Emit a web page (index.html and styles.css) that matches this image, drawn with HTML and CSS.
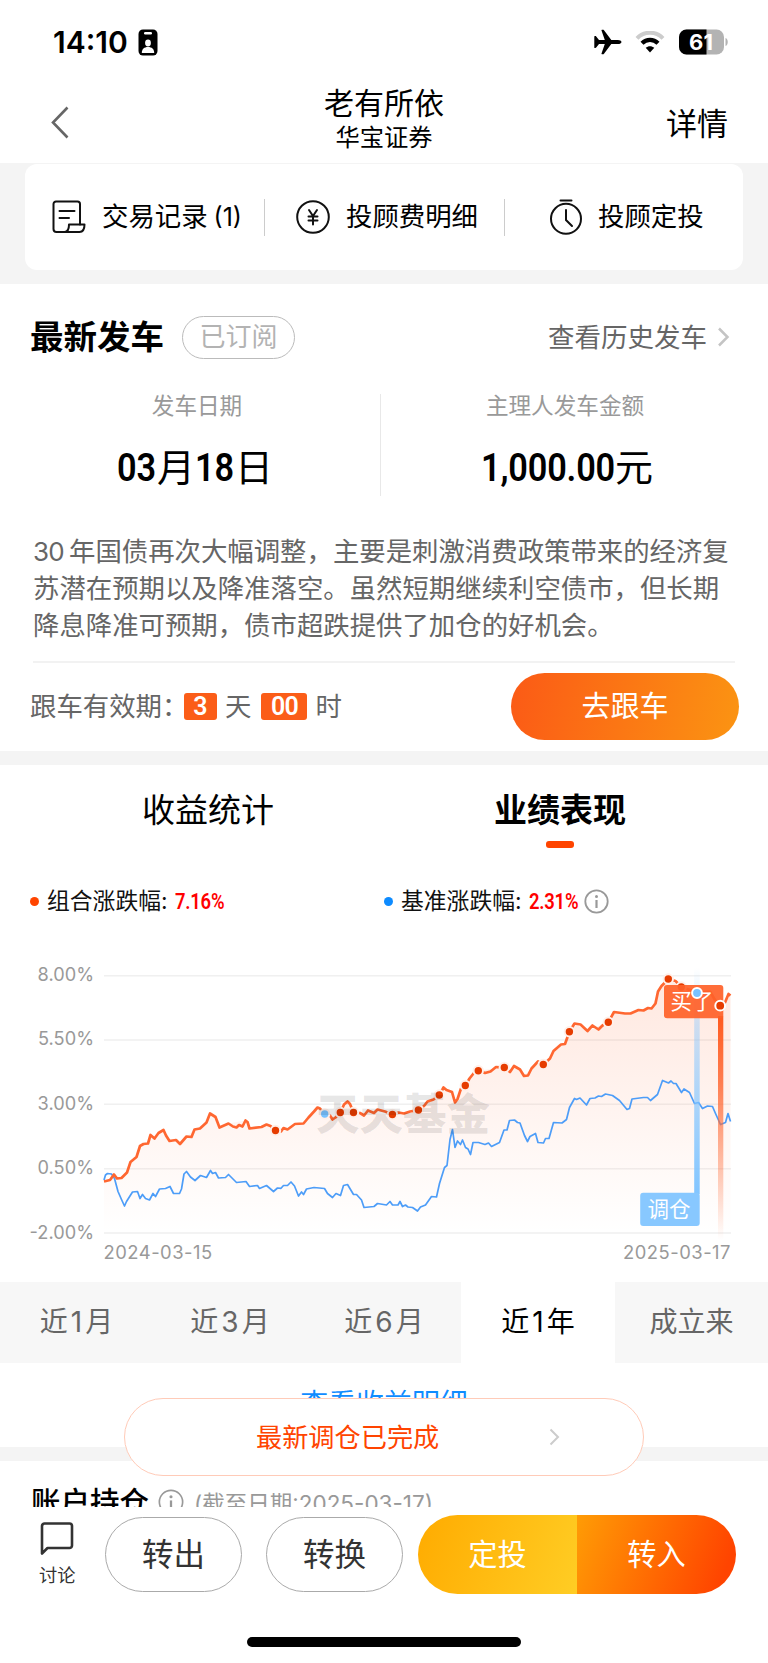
FILE: index.html
```html
<!DOCTYPE html>
<html lang="zh-CN">
<head>
    <meta charset="UTF-8">
    <meta name="viewport" content="width=device-width, initial-scale=1.0">
    <title>老有所依</title>
    <link rel="stylesheet" href="styles.css">
</head>
<body>
    <div class="status-bar">
        <div class="status-left">
            <span class="time">14:10</span>
            <svg width="20" height="27" viewBox="0 0 20 27">
                <rect x="0.5" y="0.5" width="19" height="26" rx="4.5" fill="#000"/>
                <rect x="6" y="3" width="8" height="2.4" rx="1.2" fill="#fff"/>
                <ellipse cx="10" cy="14" rx="2.9" ry="3.4" fill="#fff"/>
                <path d="M3.8 24c0-4 2.4-6 6.200-6s6.200 2 6.200 6z" fill="#fff"/>
            </svg>
        </div>
        <div class="status-right">
            <svg width="28" height="26" viewBox="0 0 28 26">
                <path d="M27.500 13c0 1.300-1.700 2.100-3.600 2.100h-6.600l-7.300 9.700c-.3.400-.6.500-1 .5h-1c-.5 0-.7-.3-.5-.8l3.300-9.400H5l-2.800 3.500c-.2.300-.5.400-.8.400H.9c-.4 0-.6-.2-.6-.6V7.600c0-.4.2-.6.6-.6h.5c.3 0 .6.100.8.400L5 10.900h5.800L7.500 1.500c-.2-.5 0-.8.500-.8h1c.4 0 .7.100 1 .5l7.300 9.700h6.600c1.900 0 3.600.8 3.600 2.100z"/>
            </svg>
            <svg class="wifi" width="30" height="22" viewBox="0 0 30 22">
                <path d="M2 7.300C9-.2 21-.2 28 7.300" fill="none" stroke="#ccc" stroke-width="4"/>
                <path d="M7 12.300c4.500-4.500 11.500-4.500 16 0" fill="none" stroke="#000" stroke-width="4.200"/>
                <path d="M15 21.500l-4.300-4.700c2.400-2.200 6.200-2.200 8.600 0z"/>
            </svg>
            <svg width="50" height="26" viewBox="0 0 50 26">
                <rect x="0" y="0.500" width="45" height="25" rx="7.500" fill="#b3b3b3"/>
                <path d="M7.500.5H27.500v25H7.500a7.500 7.500 0 0 1-7.500-7.500V8A7.500 7.500 0 0 1 7.500.5z"/>
                <path d="M46.500 9c3 1 3 7 0 8z" fill="#b3b3b3"/>
                <text x="22" y="20.500" text-anchor="middle" class="battery-num">61</text>
            </svg>
        </div>
    </div>

    <header class="nav">
        <svg class="nav-back" width="20" height="33" viewBox="0 0 20 33">
            <path d="M17.500 1.500L3 16.500l14.500 15" fill="none" stroke="#666" stroke-width="2.600"/>
        </svg>
        <div class="nav-title">
            <h1>老有所依</h1>
            <p>华宝证券</p>
        </div>
        <a class="nav-more">详情</a>
    </header>

    <div class="quick-wrap">
        <div class="quick">
            <a class="quick-item item-record">
                <svg width="34" height="34" viewBox="0 0 34 34" fill="none" stroke="#111" stroke-width="2" stroke-linejoin="round" stroke-linecap="round">
                    <path d="M14 32H4.500A3 3 0 0 1 1.500 29V4A2.500 2.500 0 0 1 4 1.500h21.500A2.500 2.500 0 0 1 28 4v20.500"/>
                    <path d="M7.500 11h15M7.500 18h9.500"/>
                    <path d="M17 24.500h15.500c0 5-2 7.500-5 7.500H12.500c3 0 4.500-3 4.500-7.500z"/>
                </svg>
                <span>交易记录<i>(1)</i></span>
            </a>
            <a class="quick-item item-fee">
                <svg width="34" height="34" viewBox="0 0 34 34" fill="none" stroke="#111" stroke-width="2" stroke-linecap="round">
                    <circle cx="17" cy="17" r="15.800"/>
                    <path d="M13 10l4 6 4-6M17 16v8.500M12.500 16.500h9M12.500 20.500h9"/>
                </svg>
                <span>投顾费明细</span>
            </a>
            <a class="quick-item item-plan">
                <svg width="34" height="36" viewBox="0 0 34 36" fill="none" stroke="#111" stroke-width="2" stroke-linecap="round">
                    <path d="M11.500 1.500h11"/>
                    <circle cx="17" cy="19.800" r="15"/>
                    <path d="M17 11v10l6 6"/>
                </svg>
                <span>投顾定投</span>
            </a>
        </div>
    </div>

    <section class="trip">
        <div class="trip-head">
            <h2>最新发车</h2>
            <span class="tag">已订阅</span>
            <a class="history"><span>查看历史发车</span>
                <svg width="14" height="20" viewBox="0 0 14 20"><path d="M2 1.500l8.500 8.500L2 18.500" fill="none" stroke="#c4c4c4" stroke-width="2.500"/></svg>
            </a>
        </div>
        <div class="trip-data">
            <div class="trip-col">
                <p class="label">发车日期</p>
                <p class="value"><b>03</b>月<b>18</b>日</p>
            </div>
            <div class="trip-col">
                <p class="label">主理人发车金额</p>
                <p class="value"><b class="amount">1,000.00</b>元</p>
            </div>
        </div>
        <p class="trip-desc"><span class="num">30</span>年国债再次大幅调整，主要是刺激消费政策带来的经济复<br>苏潜在预期以及降准落空。虽然短期继续利空债市，但长期<br>降息降准可预期，债市超跌提供了加仓的好机会。</p>
        <div class="trip-foot">
            <span class="expire">跟车有效期：</span>
            <b class="count">3</b>
            <span class="unit">天</span>
            <b class="count wide">00</b>
            <span class="unit">时</span>
            <button class="btn-follow">去跟车</button>
        </div>
    </section>

    <section class="perf">
        <div class="tabs">
            <a class="tab">收益统计</a>
            <a class="tab active">业绩表现</a>
        </div>
        <div class="legend">
            <div class="legend-item"><i class="dot"></i><span>组合涨跌幅:</span><b>7.16%</b></div>
            <div class="legend-item"><i class="dot blue"></i><span>基准涨跌幅:</span><b>2.31%</b>
                <svg width="25" height="25" viewBox="0 0 25 25"><circle cx="12.500" cy="12.500" r="11.200" fill="none" stroke="#999" stroke-width="1.800"/><circle cx="12.500" cy="7.500" r="1.500" fill="#999"/><path d="M12.500 11v8" stroke="#999" stroke-width="2.200"/></svg>
            </div>
        </div>

        <svg class="chart" width="768" height="320" viewBox="0 0 768 320">
            <defs>
                <linearGradient id="area" x1="0" y1="0" x2="0" y2="1">
                    <stop offset="0" stop-color="#ff5a1f" stop-opacity="0.14"/>
                    <stop offset="1" stop-color="#ff5a1f" stop-opacity="0"/>
                </linearGradient>
                <linearGradient id="buyBar" x1="0" y1="0" x2="0" y2="1">
                    <stop offset="0" stop-color="#ff5a1f"/>
                    <stop offset="0.3" stop-color="#ff6a36" stop-opacity="0.85"/>
                    <stop offset="1" stop-color="#ff6a36" stop-opacity="0"/>
                </linearGradient>
                <linearGradient id="adjustBar" x1="0" y1="0" x2="0" y2="1">
                    <stop offset="0" stop-color="#82c5ff" stop-opacity="0"/>
                    <stop offset="0.25" stop-color="#82c5ff" stop-opacity="0.4"/>
                    <stop offset="1" stop-color="#82c5ff"/>
                </linearGradient>
            </defs>

            <path class="grid" d="M104 25.700H731M104 90H731M104 154.300H731M104 218.700H731M104 283H731"/>
            <g class="axis-y">
                <text x="94" y="31">8.00%</text>
                <text x="94" y="95.300">5.50%</text>
                <text x="94" y="159.600">3.00%</text>
                <text x="94" y="224">0.50%</text>
                <text x="94" y="288.800">-2.00%</text>
            </g>
            <text class="axis-x" x="103.500" y="309">2024-03-15</text>
            <text class="axis-x end" x="731" y="309">2025-03-17</text>

            <path fill="url(#area)" d="M104 231.500L110 230 114 224.500 117 228.500 127 222.500 130.500 212 136.500 207 140 196 148 193.500 150.500 185 154.500 188.500 163.500 180 169.500 191 180 194 186.500 186.500 194.500 179.500 206.500 172.500 210 163.500 215.500 167 219.500 177.500 228.500 173.500 245.500 170.500 249.500 178.500 266.500 174.500 281 181.500 303.500 173.500 317.500 157.500 332.500 169.500 347.500 151.500 353.500 162.500 392.500 164.500 418.500 160 443.500 137.500 452 142 455 152.500 461 138.500 478.500 120.500 504.500 117.500 510 122 514 116 524 126 538 111.500 543.500 114.500 553.500 101 565 94 574.500 73.500 587.500 81 608.500 72 614 62 630.500 63.500 651.500 58.500 658 41.500 668.500 29 681.500 37 697 43 710 41.500 720 55.500 730.500 45.500V283H104z"/>

            <polyline class="line-base" points="104,230 105.500,225 107.500,223.500 111.500,224 114.500,228.500 118,241.500 121.500,249.500 124.500,256 126.500,251.500 132.500,242 137.500,241.500 140,248.500 142.500,244.500 145.500,248.500 149.500,250 153,243.500 155.500,246.500 159.500,239 165.500,238.500 170,236.500 173.500,243.500 179.500,243.500 181.500,239 184,224 186.500,221.500 190.500,227 195,230.500 200.500,225.500 206.500,227.500 210.500,220.500 212.500,223.500 215.500,222.500 218.500,228 225.500,227.500 228.500,224.500 236.500,232.500 246,231.500 249.500,236.500 257.500,235.500 259.500,238.500 266.500,235.500 273.500,241.500 277.500,238 281,238.300 283.500,235.500 287.500,235.500 291,232 294.500,236 298.500,246 301.500,242 303.500,244.500 306.500,239 314,237.500 324.500,238.500 327.500,243.500 332.500,247.500 336,243.500 340.500,245.500 343.500,235.500 347.500,234.500 353.500,244.500 356.500,244.500 361.500,250 364,257.500 374,256.500 377.500,253.500 386.500,255 390,251.500 392.500,255 398,255 400,251.500 402.500,256.500 405.500,255 408,257 412.500,257.500 417.500,261 420.500,257 425.500,255 431.500,246.500 436.500,247 439.500,233.500 444.500,217.500 447,215.500 450,189.500 452.500,179.500 455,197.500 457.500,191 460.500,194.500 462.500,190 465.500,197.500 468,199 470.500,204.500 473,192.500 478.500,192.500 485,194.500 488.500,193 491.500,196.500 499.500,192.500 504,180 507,180 509.500,170.500 514.500,170 517.500,172.500 520,173 524.500,185.500 527.500,191.500 530,186.500 535.500,183.500 538,192.500 543.500,193 545.500,188.500 549,188.500 553.500,172.500 562,173 566.500,169.500 569.500,157.500 574.500,148.500 576.500,149.500 580,148 586.500,155 590,148.500 595,148 598.500,146 601.500,146.500 605.500,144 612.500,145.500 619.500,150.500 627,159.500 629.500,158.500 632,149 643.500,147.500 647.500,147.500 650.500,150.500 657.500,144.500 662.500,130.500 668.500,133 671,131 673.500,133.500 676,133.500 681.500,142.500 684,139 689.500,142.500 694.500,153.500 698.500,152.500 702.500,158.500 707.500,156 712.500,156.500 715.500,163.500 720.500,174.500 725.500,172.500 728,163.500 730.500,171.500"/>
            <polyline class="line-fund" points="104,231.500 110,230 114,224.500 117,228.500 121.500,228 127,222.500 130.500,212 136.500,207 140,196 143.500,194 148,193.500 150.500,185 154.500,188.500 158.500,183 163.500,180 166,185.500 169.500,191 176,190 180,194 186.500,186.500 191.500,187 194.500,179.500 200,178.500 206.500,172.500 210,163.500 215.500,167 219.500,177.500 228.500,173.500 233,176.500 236.500,177.500 239,175 242.500,176.500 245.500,170.500 247.500,172 249.500,178.500 261.500,177 266.500,174.500 270.500,176 275.500,180.500 281,181.500 283.500,178 287.500,179.500 295,174 303.500,173.500 308.500,167.500 314,161.500 317.500,157.500 320,158.500 324.500,164 330,165.500 332.500,169.500 335.500,167.500 340.500,162.500 344,154.500 347.500,151.500 350,154 353.500,162.500 360,163 364,165.500 368,160.500 374,163 377.500,159.500 385,161.500 392.500,164.500 398.500,162.500 404,163.500 410,161.500 418.500,160 424,156 427.500,151.500 433.500,149.500 439.500,145 443.500,137.500 446.500,140 452,142 455,152.500 457.500,149 461,138.500 465.500,135.500 469.500,128.500 473.500,123.500 478.500,120.500 485,123 490.500,121.500 496,117 504.500,117.500 510,122 514,116 520,119.500 524,126 528,125.500 531.500,118.500 538,111.500 543.500,114.500 550,108.500 553.500,101 561,94.500 565,94 569.500,81.500 574.500,73.500 580.500,74.500 587.500,81 592.500,75.500 598.500,79.500 602.500,75.500 608.500,72 614,62 625,63.500 630.500,63.500 638.500,60 643.500,60.500 648,58 651.500,58.500 655.500,53.500 658,41.500 661.500,36 668.500,29 675.500,31 681.500,37 688.500,39.500 697,43 705,42 710,41.500 715,50 720,55.500 725,52.500 728.500,44 730.500,45.500"/>

            <g class="points">
                <circle cx="275.500" cy="180.500" r="4.700"/>
                <circle class="adjust" cx="324.700" cy="164" r="4.700"/>
                <circle cx="340.300" cy="162.500" r="4.700"/>
                <circle cx="353.500" cy="162.500" r="4.700"/>
                <circle cx="392.400" cy="164.500" r="4.700"/>
                <circle cx="418.400" cy="160" r="4.700"/>
                <circle cx="439.300" cy="145" r="4.700"/>
                <circle cx="465.300" cy="135.500" r="4.700"/>
                <circle cx="478.300" cy="120.800" r="4.700"/>
                <circle cx="504.300" cy="117.500" r="4.700"/>
                <circle cx="543.300" cy="114.500" r="4.700"/>
                <circle cx="569.400" cy="81.700" r="4.700"/>
                <circle cx="608.300" cy="72.200" r="4.700"/>
                <circle cx="668.300" cy="29" r="4.700"/>
                <circle cx="681.300" cy="37" r="4.700"/>
            </g>
            <text class="watermark" x="403" y="180">天天基金</text>

            <!-- 调仓标记 -->
            <rect x="694.200" y="18" width="5.500" height="226" fill="url(#adjustBar)"/>
            <rect x="640.200" y="242.700" width="59.500" height="33.300" rx="3" fill="#88c8ff"/>
            <text class="flag-text" x="669" y="266.500">调仓</text>

            <!-- 买入标记 -->
            <rect x="718" y="66" width="5.300" height="224" fill="url(#buyBar)"/>
            <rect x="664" y="35" width="59.300" height="33.300" rx="3" fill="#ff6128" fill-opacity="0.92"/>
            <text class="flag-text" x="692" y="59">买了</text>
            <g class="points front">
                <circle class="adjust" cx="697" cy="43" r="4.900"/>
                <circle cx="720.200" cy="55.700" r="4.900"/>
            </g>
        </svg>

        <div class="ranges">
            <a>近<i>1</i>月</a>
            <a>近<i>3</i>月</a>
            <a>近<i>6</i>月</a>
            <a class="active">近<i>1</i>年</a>
            <a>成立来</a>
        </div>
        <a class="detail-link">查看收益明细</a>
    </section>

    <section class="holding">
        <h3>账户持仓</h3>
        <svg width="26" height="26" viewBox="0 0 25 25"><circle cx="12.500" cy="12.500" r="11.200" fill="none" stroke="#999" stroke-width="1.600"/><circle cx="12.500" cy="7.500" r="1.500" fill="#999"/><path d="M12.500 11v8" stroke="#999" stroke-width="2.200"/></svg>
        <span>(截至日期<em>:2025-03-17)</em></span>
    </section>

    <a class="toast"><span>最新调仓已完成</span>
        <svg width="12" height="18" viewBox="0 0 12 18"><path d="M1.500 1.500L9 9l-7.500 7.500" fill="none" stroke="#ccc" stroke-width="2"/></svg>
    </a>

    <footer class="bottom">
        <div class="actions">
            <a class="talk">
                <svg width="34" height="34" viewBox="0 0 34 34"><path d="M2 31.500V4A2.500 2.500 0 0 1 4.500 1.500h25A2.500 2.500 0 0 1 32 4v19.500A2.500 2.500 0 0 1 29.500 26H7.500z" fill="none" stroke="#333" stroke-width="2.600" stroke-linejoin="round"/></svg>
                <span>讨论</span>
            </a>
            <button class="btn-line">转出</button>
            <button class="btn-line">转换</button>
            <div class="btn-group">
                <button class="btn-plan">定投</button>
                <button class="btn-in">转入</button>
            </div>
        </div>
        <div class="home-bar"></div>
    </footer>
</body>
</html>
```

FILE: styles.css
```css
* {
    box-sizing: border-box;
    margin: 0;
    padding: 0;
}

body {
    position: relative;
    width: 768px;
    height: 1663px;
    overflow: hidden;
    background-color: #fff;
    color: #000;
    font-family: Inter, "Noto Sans CJK SC", sans-serif;
}

i,
em {
    font-style: normal;
}

svg {
    display: block;
    flex-shrink: 0;
}

button {
    border: none;
    background: none;
    font-family: inherit;
}

/* 状态栏 */
.status-bar {
    display: flex;
    justify-content: space-between;
    align-items: center;
    height: 84px;
    padding: 0 39px 0 53px;
}

.status-left,
.status-right {
    display: flex;
    align-items: center;
}

.time {
    width: 85px;
    font-size: 30px;
    font-weight: 600;
    letter-spacing: 0;
}

.status-right {
    gap: 13px;
}

.wifi {
    margin-right: 1px;
}

.battery-num {
    fill: #fff;
    font-size: 22px;
    font-weight: 700;
}

/* 导航 */
.nav {
    display: grid;
    grid-template-columns: 1fr auto 1fr;
    height: 79px;
    padding: 0 40px 0 50px;
}

.nav-back {
    margin-top: 22px;
}

.nav-title {
    margin: 0 5px 0 -5px;
    text-align: center;
}

.nav-title h1 {
    font-size: 30px;
    font-weight: 400;
    line-height: 38px;
}

.nav-title p {
    font-size: 24.300px;
    line-height: 30px;
}

.nav-more {
    margin-top: 20px;
    font-size: 31px;
    line-height: 40px;
    text-align: right;
}

/* 快捷入口 */
.quick-wrap {
    height: 121px;
    padding: 1px 25px 14px;
    background-color: #f4f4f4;
}

.quick {
    display: grid;
    grid-template-columns: 239px 240px 239px;
    height: 106px;
    border-radius: 12px;
    background-color: #fff;
}

.quick-item {
    position: relative;
    display: flex;
    align-items: center;
    font-size: 26.400px;
    line-height: 36px;
    white-space: nowrap;
}

.quick-item span {
    margin-bottom: 2px;
}

.quick-item i {
    margin-left: 6px;
    font-size: 25px;
}

.item-record {
    padding-left: 27px;
    gap: 16px;
}

.item-fee {
    padding-left: 32px;
    gap: 16px;
}

.item-plan {
    padding-left: 45px;
    gap: 15px;
}

.quick-item + .quick-item::before {
    content: "";
    position: absolute;
    left: 0;
    top: 35px;
    width: 1px;
    height: 37px;
    background-color: #ccc;
}

/* 最新发车 */
.trip {
    height: 481px;
    border-bottom: 14px solid #f4f4f4;
    padding: 31px 29px 0 30px;
}

.trip-head {
    display: flex;
    align-items: center;
    height: 44px;
}

.trip-head h2 {
    font-size: 33.500px;
    line-height: 44px;
}

.tag {
    margin-left: 18px;
    width: 113px;
    height: 43px;
    border: 1px solid #bbb;
    border-radius: 22px;
    color: #b3b3b3;
    font-size: 26px;
    line-height: 39px;
    text-align: center;
}

.history {
    display: flex;
    align-items: center;
    gap: 10px;
    margin-left: auto;
    margin-right: 8px;
    color: #666;
    font-size: 26.500px;
}

.history span {
    margin-bottom: 3px;
}

.trip-data {
    display: grid;
    grid-template-columns: 350px 1fr;
    height: 102px;
    margin-top: 35px;
    text-align: center;
}

.trip-col + .trip-col {
    border-left: 1px solid #e8e8e8;
    padding-left: 14px;
}

.trip-col:first-child {
    padding-right: 20px;
}

.trip-col .label {
    margin-left: -4px;
    color: #999;
    font-size: 22.600px;
    line-height: 24px;
}

.trip-col:first-child .label {
    margin-left: 4px;
}

.trip-col .value {
    margin-top: 25px;
    font-size: 38px;
    line-height: 48px;
}

.value b,
.count,
.legend b {
    font-family: Roboto, sans-serif;
    font-weight: 600;
}

/* 数字用窄体 */
.value b {
    display: inline-block;
    width: 40px;
    font-size: 39px;
    letter-spacing: -0.2px;
    transform: scaleX(0.88);
    transform-origin: left;
}

.value .amount {
    width: 132px;
    margin-right: 2px;
    text-align: left;
}

.trip-desc {
    margin: 37px -10px 0 3px;
    color: #666;
    font-size: 26.400px;
    line-height: 37px;
    white-space: nowrap;
}

.trip-desc .num {
    display: inline-block;
    width: 36px;
    font-size: 26px;
    letter-spacing: -0.8px;
}

.trip-foot {
    display: flex;
    align-items: center;
    height: 88px;
    margin: 17px 4px 0 3px;
    border-top: 2px solid #f2f2f2;
    color: #666;
    font-size: 26.400px;
}

.expire {
    width: 152px;
    margin: 0 0 4px -3px;
    white-space: nowrap;
}

.count {
    width: 33px;
    height: 27px;
    margin-left: 2px;
    border-radius: 3px;
    background-color: #fb5d18;
    color: #fff;
    font-size: 25px;
    line-height: 28px;
    text-align: center;
}

.count.wide {
    width: 46px;
    margin-left: 10px;
    letter-spacing: -1px;
}

.unit {
    margin: 0 0 4px 8px;
}

.btn-follow {
    width: 228px;
    height: 67px;
    margin-left: auto;
    margin-right: -4px;
    padding-bottom: 5px;
    border-radius: 34px;
    background: linear-gradient(100deg, #fb5a16, #fb9412);
    color: #fff;
    font-size: 29px;
}

/* 业绩表现 */
.tabs {
    display: flex;
    height: 83px;
    padding: 0 32px;
}

.tab {
    position: relative;
    flex: 1;
    height: 83px;
    font-size: 33px;
    line-height: 91px;
    text-align: center;
}

.tab.active {
    font-weight: 700;
}

.tab.active::after {
    content: "";
    position: absolute;
    left: 50%;
    bottom: 0;
    width: 28px;
    height: 7px;
    margin-left: -14px;
    border-radius: 3px;
    background-color: #ff4400;
}

.legend {
    display: grid;
    grid-template-columns: 354px 1fr;
    height: 102px;
    padding: 41px 30px 0;
}

.legend-item {
    display: flex;
    align-items: center;
    height: 24px;
    color: #111;
    font-size: 22.800px;
}

.legend-item span {
    width: 119px;
    margin-bottom: 3px;
    white-space: nowrap;
}

.dot {
    width: 9px;
    height: 9px;
    margin-right: 8px;
    border-radius: 50%;
    background-color: #ff4400;
}

.dot.blue {
    background-color: #0d8bff;
}

.legend b {
    width: 49px;
    margin-left: 9px;
    color: #f00;
    font-size: 22.500px;
    letter-spacing: -0.3px;
    transform: scaleX(0.82);
    transform-origin: left;
}

.legend svg {
    margin-left: 6px;
}

.grid {
    fill: none;
    stroke: #f0f0f0;
    stroke-width: 1.500;
}

.axis-y text,
.axis-x {
    fill: #999;
    font-size: 18.400px;
    letter-spacing: 0.5px;
}

.axis-y text {
    font-size: 18.200px;
    letter-spacing: 0;
}

.axis-y text,
.axis-x.end {
    text-anchor: end;
}

.line-base,
.line-fund {
    fill: none;
    stroke-linejoin: round;
}

.line-base {
    stroke: #4d9df8;
    stroke-width: 1.700;
}

.line-fund {
    stroke: #ff6731;
    stroke-width: 2.700;
}

.points circle {
    fill: #e63c00;
    stroke: #fff0ea;
    stroke-width: 2;
}

.points .adjust {
    fill: #78c2ff;
}

.points.front circle {
    stroke: #fff;
}

.watermark {
    fill: #000;
    fill-opacity: 0.1;
    font-size: 43.500px;
    font-weight: 900;
    text-anchor: middle;
}

.flag-text {
    fill: #fff;
    font-size: 21.500px;
    text-anchor: middle;
}

.ranges {
    display: grid;
    grid-template-columns: 153px 154px 154px 154px 153px;
    height: 81px;
    margin-top: 12px;
    background-color: #f7f7f7;
    color: #666;
    font-size: 28px;
    line-height: 80px;
    text-align: center;
}

.ranges i {
    margin: 0 3px;
}

.ranges .active {
    background-color: #fff;
    color: #000;
}

.detail-link {
    display: block;
    height: 84px;
    color: #108cff;
    font-size: 27.900px;
    line-height: 83px;
    text-align: center;
}

/* 账户持仓 */
.holding {
    display: flex;
    align-items: center;
    height: 98px;
    padding: 0 31px 2px;
    border-top: 14px solid #f4f4f4;
}

.holding h3 {
    font-size: 29.500px;
    font-weight: 500;
    line-height: 40px;
}

.holding svg {
    margin: 0 10px 0 9px;
}

.holding span {
    color: #999;
    font-size: 22.500px;
}

/* 浮动提示 */
.toast {
    position: absolute;
    left: 124px;
    top: 1398px;
    display: flex;
    align-items: center;
    width: 520px;
    height: 78px;
    padding-left: 131px;
    border: 1px solid #ffcbb8;
    border-radius: 39px;
    background-color: #fff;
    color: #ff4400;
    font-size: 26.200px;
}

.toast span {
    margin-bottom: 3px;
}

.toast svg {
    margin-left: 110px;
}

/* 底部操作栏 */
.bottom {
    position: absolute;
    left: 0;
    bottom: 0;
    width: 768px;
    height: 156px;
    background-color: #fff;
}

.actions {
    display: flex;
    align-items: center;
    height: 94px;
    padding-left: 39px;
}

.talk {
    width: 36px;
    margin-right: 30px;
    color: #333;
    font-size: 18.300px;
    line-height: 24px;
    white-space: nowrap;
}

.talk svg {
    margin: 1px 0 7px 1px;
}

.btn-line {
    width: 137px;
    height: 75px;
    margin-right: 24px;
    padding-bottom: 4px;
    border: 1px solid #aaa;
    border-radius: 38px;
    color: #333;
    font-size: 31.500px;
}

.btn-group {
    display: flex;
    width: 318px;
    height: 79px;
    margin-left: -9px;
    overflow: hidden;
    border-radius: 40px;
}

.btn-group button {
    flex: 1;
    padding-bottom: 5px;
    color: #fff;
    font-size: 29.200px;
}

.btn-plan {
    background: linear-gradient(110deg, #ffab00, #ffcd24);
}

.btn-in {
    background: linear-gradient(110deg, #ff9c05, #ff4400 90%);
}

.home-bar {
    width: 274px;
    height: 10px;
    margin: 36px auto 0;
    border-radius: 5px;
    background-color: #000;
}
```
